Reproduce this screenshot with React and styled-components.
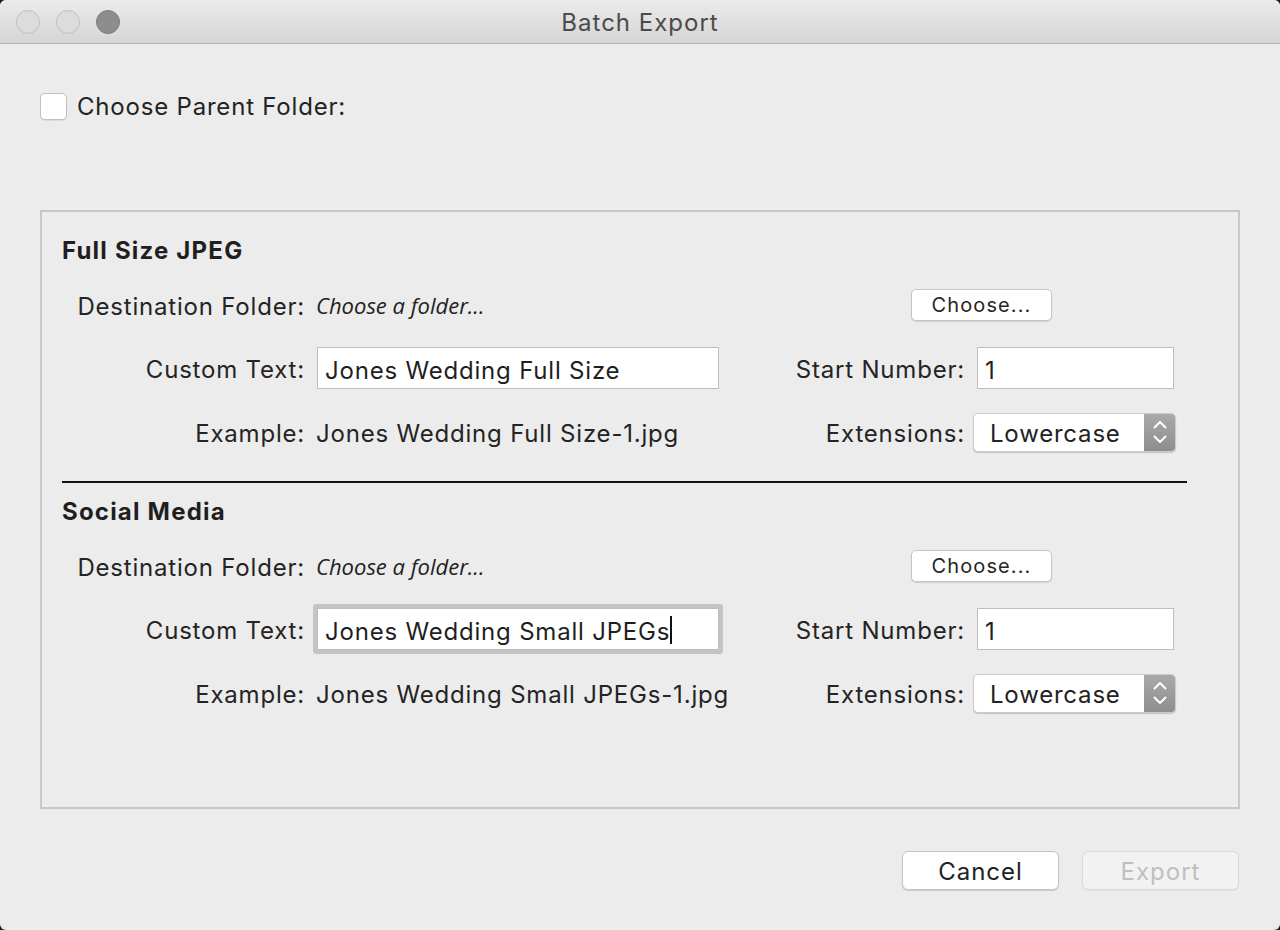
import React from "react";
import styled, { createGlobalStyle } from "styled-components";

const Global = createGlobalStyle`
  html, body { margin: 0; padding: 0; background: #1c1c1c; }
  body { font-family: Inter, "Noto Sans", "Liberation Sans", sans-serif; }
  * { box-sizing: border-box; }
`;

const Window = styled.div`
  width: 1280px;
  height: 930px;
  background: #ececec;
  border-radius: 6px;
  overflow: hidden;
  display: flex;
  flex-direction: column;
  color: #232323;
  letter-spacing: 0.8px;
`;

const TitleBar = styled.div`
  height: 44px;
  flex: none;
  display: grid;
  grid-template-columns: 1fr auto 1fr;
  align-items: center;
  background: linear-gradient(#ebebeb, #d5d5d5);
  border-bottom: 1px solid #b5b5b5;
`;

const Lights = styled.div`
  display: flex;
  gap: 16px;
  padding-left: 16px;
`;

const Light = styled.span`
  width: 24px;
  height: 24px;
  border-radius: 50%;
  background: ${(p) => (p.$dark ? "#8d8d8d" : "#dcdcdc")};
  border: 1px solid ${(p) => (p.$dark ? "#7c7c7c" : "#bfbfbf")};
`;

const Title = styled.div`
  font-size: 24px;
  color: #4b4b4b;
  letter-spacing: 1px;
  padding-top: 2px;
`;

const Content = styled.div`
  padding: 49px 40px 0 40px;
  display: flex;
  flex-direction: column;
`;

const CheckRow = styled.label`
  display: flex;
  align-items: center;
  gap: 10px;
  font-size: 24px;
  height: 27px;
  line-height: 30px;
`;

const Checkbox = styled.span`
  width: 27px;
  height: 27px;
  border-radius: 5px;
  background: #fff;
  border: 1px solid #c2c2c2;
  box-shadow: 0 0.5px 1px rgba(0, 0, 0, 0.08);
`;

const Panel = styled.div`
  margin-top: 90px;
  height: 599px;
  border: 2px solid #c8c8c8;
  padding: 24px 20px;
  display: flex;
  flex-direction: column;
`;

const Heading = styled.div`
  font-size: 24px;
  font-weight: 700;
  line-height: 30px;
  height: 30px;
  color: #1f1f1f;
  letter-spacing: 1.2px;
`;

const Grid = styled.div`
  margin-top: 22px;
  display: grid;
  grid-template-columns: 243px 402px 234px 200px;
  grid-template-rows: 34px 42px 36px;
  column-gap: 12px;
  row-gap: 25px;
  align-items: center;
`;

const Label = styled.div`
  justify-self: end;
  font-size: 24px;
  white-space: nowrap;
  color: #242424;
  padding-top: 2px;
`;

const Hint = styled.div`
  justify-self: start;
  margin-left: -1px;
  font-family: "Open Sans", "Noto Sans", sans-serif;
  font-style: italic;
  font-size: 22px;
  letter-spacing: 0px;
  color: #222;
  white-space: nowrap;
`;

const Value = styled.div`
  justify-self: start;
  margin-left: -1px;
  font-size: 24px;
  white-space: nowrap;
  color: #242424;
  padding-top: 2px;
`;

const ChooseButton = styled.button`
  grid-column: 3 / span 2;
  justify-self: start;
  margin-left: 180px;
  width: 141px;
  height: 32px;
  border-radius: 5px;
  border: 1px solid #c6c6c6;
  background: #fff;
  box-shadow: 0 1px 1px rgba(0, 0, 0, 0.12);
  font-family: inherit;
  font-size: 20px;
  letter-spacing: 1.1px;
  color: #262626;
  padding: 0;
`;

const TextField = styled.div`
  width: ${(p) => p.$w}px;
  height: 42px;
  background: #fff;
  border: 1px solid #bdbdbd;
  display: flex;
  align-items: center;
  padding: 4px 0 0 7px;
  font-size: 24px;
  color: #1f1f1f;
  white-space: nowrap;
  box-shadow: ${(p) => (p.$focused ? "0 0 0 4px #c4c4c4" : "none")};
  border-radius: ${(p) => (p.$focused ? "1px" : "0")};
`;

const Caret = styled.span`
  display: inline-block;
  width: 2px;
  height: 28px;
  background: #111;
  margin-top: -3px;
`;

const Select = styled.div`
  margin-left: -4px;
  width: 203px;
  height: 39px;
  background: #fff;
  border: 1px solid #cbcbcb;
  border-radius: 5px;
  box-shadow: 0 1px 1px rgba(0, 0, 0, 0.18);
  display: flex;
  align-items: stretch;
  overflow: hidden;
`;

const SelectText = styled.div`
  flex: 1;
  display: flex;
  align-items: center;
  padding: 2px 0 0 16px;
  font-size: 24px;
  color: #222;
`;

const Stepper = styled.div`
  width: 31px;
  background: linear-gradient(#a9a9a9, #8e8e8e);
  display: flex;
  align-items: center;
  justify-content: center;
`;

const Divider = styled.div`
  height: 2px;
  background: #121212;
  margin: 31px 31px 14px 0;
`;

const Footer = styled.div`
  margin-top: 42px;
  display: flex;
  justify-content: flex-end;
  gap: 23px;
  padding-right: 1px;
`;

const DialogButton = styled.button`
  width: 157px;
  height: 39px;
  border-radius: 6px;
  font-family: inherit;
  font-size: 24px;
  letter-spacing: 1px;
  padding: 2px 0 0;
  background: ${(p) => (p.disabled ? "#f2f2f2" : "#fff")};
  color: ${(p) => (p.disabled ? "#bfbfbf" : "#222")};
  border: 1px solid ${(p) => (p.disabled ? "#dadada" : "#c4c4c4")};
  box-shadow: ${(p) => (p.disabled ? "0 1px 1px rgba(0,0,0,0.05)" : "0 1px 1px rgba(0,0,0,0.15)")};
`;

const Chevrons = () => (
  <svg width="18" height="30" viewBox="0 0 18 30" fill="none" stroke="#fff" strokeWidth="2" strokeLinecap="round" strokeLinejoin="round">
    <path d="M3.5 10.5 L9 5 L14.5 10.5" />
    <path d="M3.5 19.5 L9 25 L14.5 19.5" />
  </svg>
);

function ExportSection({ title, text, focused }) {
  return (
    <>
      <Heading>{title}</Heading>
      <Grid>
        <Label>Destination Folder:</Label>
        <Hint>Choose a folder...</Hint>
        <ChooseButton>Choose...</ChooseButton>

        <Label>Custom Text:</Label>
        <TextField $w={402} $focused={focused}>
          {text}
          {focused && <Caret />}
        </TextField>
        <Label>Start Number:</Label>
        <TextField $w={197}>1</TextField>

        <Label>Example:</Label>
        <Value>{text}-1.jpg</Value>
        <Label>Extensions:</Label>
        <Select>
          <SelectText>Lowercase</SelectText>
          <Stepper>
            <Chevrons />
          </Stepper>
        </Select>
      </Grid>
    </>
  );
}

export default function App() {
  return (
    <>
      <Global />
      <Window>
        <TitleBar>
          <Lights>
            <Light />
            <Light />
            <Light $dark />
          </Lights>
          <Title>Batch Export</Title>
          <div />
        </TitleBar>
        <Content>
          <CheckRow>
            <Checkbox />
            Choose Parent Folder:
          </CheckRow>
          <Panel>
            <ExportSection title="Full Size JPEG" text="Jones Wedding Full Size" />
            <Divider />
            <ExportSection title="Social Media" text="Jones Wedding Small JPEGs" focused />
          </Panel>
          <Footer>
            <DialogButton>Cancel</DialogButton>
            <DialogButton disabled>Export</DialogButton>
          </Footer>
        </Content>
      </Window>
    </>
  );
}
